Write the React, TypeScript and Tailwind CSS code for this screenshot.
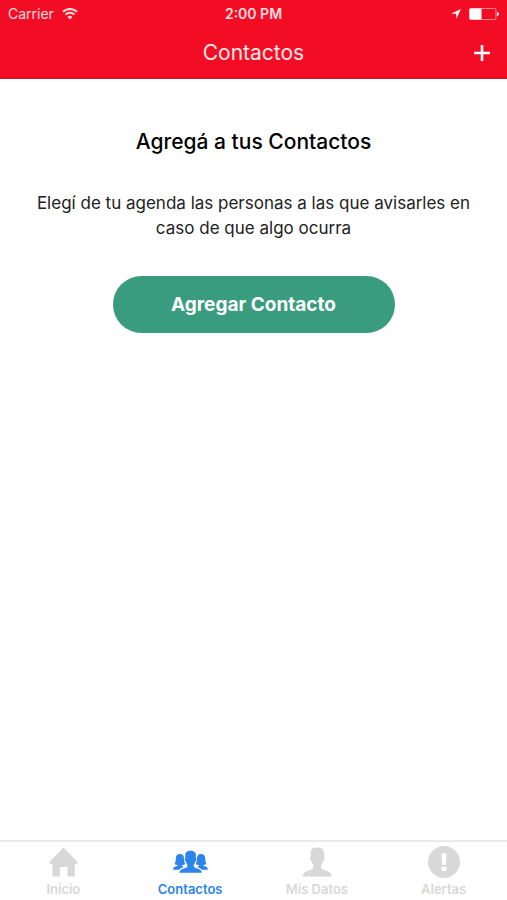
import type { ReactNode } from "react";
import clsx from "clsx";

type Tab = {
    label: string;
    icon: ReactNode;
    active?: boolean;
};

function WifiIcon() {
    return (
        <svg viewBox="0 0 16 12" className="h-3 w-4" fill="none" stroke="currentColor" strokeWidth="2" aria-hidden="true">
            <path d="M1 3.8a10 10 0 0 1 14 0" />
            <path d="M3.5 6.6a6.4 6.4 0 0 1 9 0" />
            <path d="M8 11.5 5.5 9a3.5 3.5 0 0 1 5 0Z" fill="currentColor" stroke="none" />
        </svg>
    );
}

function LocationIcon() {
    return (
        <svg viewBox="0 0 10 10" className="size-[10px]" fill="currentColor" aria-hidden="true">
            <path d="M10 0 0 4.8h5.2V10Z" />
        </svg>
    );
}

function BatteryIcon() {
    return (
        <svg viewBox="0 0 30 12" className="h-3 w-[30px]" aria-hidden="true">
            <rect x="0.5" y="0.5" width="26.5" height="11" rx="1.5" fill="none" stroke="currentColor" strokeOpacity="0.5" />
            <rect x="0.5" y="0.5" width="12" height="11" rx="1" fill="currentColor" />
            <path d="M28 4c1.2.2 2 1 2 2s-.8 1.800-2 2Z" fill="currentColor" />
        </svg>
    );
}

function HomeIcon() {
    return (
        <svg viewBox="0 0 32 32" className="size-8" fill="currentColor" aria-hidden="true">
            <path d="M16.500 1.500 31 16.500 30 17.800H27.800V30.500H20.500V21H12.800V30.500H5.500V17.800H3L2 16.500Z" />
        </svg>
    );
}

function ContactsIcon() {
    return (
        <svg viewBox="0 0 36 32" className="h-8 w-9" fill="currentColor" aria-hidden="true">
            <path d="M18.500 4.800c3.900 0 5.400 1.500 5.400 4.600v2.800c.7.100.7 1.100.4 2.100-.2.900-.6 1.400-1.100 1.500-.3 1.500-.8 2.400-1.400 3v1.600c.4 1.100 2.100 1.600 4.200 2.300 2.400.8 3.700 1.700 3.800 4.100H7.400c.1-2.400 1.400-3.300 3.800-4.100 2.100-.7 3.800-1.200 4.200-2.300v-1.600c-.6-.6-1.100-1.500-1.400-3-.5-.1-.9-.6-1.100-1.500-.3-1-.3-2 .4-2.100V9.400c0-3.100 1.500-4.600 5.400-4.600Z" />
            <path id="side" d="M7.900 8c2.900 0 4 1.600 4.100 4.500.1 2.300.2 3.700 1.300 5.400-.9.700-1.900 1-3.300 1.100v1.100l2 .8c-2 .7-4 1.600-4.900 2.800H1.100c.1-2.200 1.200-2.800 3.100-3.400.9-.3 1.500-.5 1.500-1.300-1.300-.1-2.300-.4-3.200-1.100 1.100-1.700 1.200-3.100 1.300-5.400C3.900 9.600 5 8 7.900 8Z" />
            <use href="#side" transform="matrix(-1 0 0 1 37 0)" />
        </svg>
    );
}

function PersonIcon() {
    return (
        <svg viewBox="0 0 32 32" className="size-8" fill="currentColor" aria-hidden="true">
            <path d="M16.300 1.500c4.800 0 6.700 2 6.700 6l-.1 3.200c.8.200.8 1.400.5 2.600-.3 1.100-.8 1.700-1.400 1.800-.4 1.900-1 3.100-1.800 3.900v2.700c.5 1.400 2.700 2.100 5.200 3 3.300 1.200 5.200 2.300 5.400 5.800H1.800c.2-3.500 2.100-4.600 5.400-5.800 2.500-.9 4.700-1.600 5.200-3V19c-.8-.8-1.400-2-1.800-3.900-.6-.1-1.100-.7-1.400-1.800-.3-1.200-.3-2.400.5-2.600l-.1-3.200c0-4 1.900-6 6.700-6Z" />
        </svg>
    );
}

function AlertIcon() {
    return (
        <svg viewBox="0 0 32 32" className="size-8" aria-hidden="true">
            <circle cx="16" cy="16" r="16" fill="currentColor" />
            <path d="M13.500 7.200h5l-.6 11.800h-3.800Z" fill="white" />
            <rect x="13.600" y="20.800" width="4.800" height="4.200" rx="1" fill="white" />
        </svg>
    );
}

const tabs: Tab[] = [
    { label: "Inicio", icon: <HomeIcon /> },
    { label: "Contactos", icon: <ContactsIcon />, active: true },
    { label: "Mis Datos", icon: <PersonIcon /> },
    { label: "Alertas", icon: <AlertIcon /> },
];

export default function App() {
    return (
        <div className="flex min-h-screen flex-col bg-white font-['Inter',sans-serif] text-black">
            <header className="border-b border-[#d91028] bg-[#f20d25] text-white">
                {/* Status bar */}
                <div className="grid h-7 grid-cols-[1fr_auto_1fr] items-center px-2 text-sm text-white/85">
                    <div className="flex items-center gap-2">
                        <span>Carrier</span>
                        <WifiIcon />
                    </div>
                    <span className="text-center font-semibold">2:00 PM</span>
                    <div className="flex items-center justify-end gap-2 text-white">
                        <LocationIcon />
                        <BatteryIcon />
                    </div>
                </div>

                {/* Navigation bar */}
                <div className="grid h-[50px] grid-cols-[1fr_auto_1fr] items-center px-4">
                    <h1 className="col-start-2 text-[21px] leading-7 text-white/90">Contactos</h1>
                    <button type="button" aria-label="Agregar" className="justify-self-end">
                        <svg viewBox="0 0 18 18" className="size-[18px]" stroke="currentColor" strokeWidth="2.6" aria-hidden="true">
                            <path d="M9 1v16M1 9h16" />
                        </svg>
                    </button>
                </div>
            </header>

            <main className="flex flex-1 flex-col items-center px-8 pt-[49px] text-center">
                <h2 className="text-[21px] leading-7 font-medium">Agregá a tus Contactos</h2>
                <p className="mt-[35px] text-[17px] leading-[25px] text-[#222222]">
                    Elegí de tu agenda las personas a las que avisarles en caso de que algo ocurra
                </p>
                <button
                    type="button"
                    className="mt-[35px] h-[57px] w-full max-w-[282px] rounded-full bg-[#399c7e] pt-0.5 text-[19px] font-bold text-white"
                >
                    Agregar Contacto
                </button>
            </main>

            <nav className="grid grid-cols-4 border-t-2 border-[#ebebeb] pt-1">
                {tabs.map((tab) => (
                    <a
                        key={tab.label}
                        href="#"
                        aria-current={tab.active ? "page" : undefined}
                        className={clsx(
                            "flex flex-col items-center gap-[3px] pb-[3px] text-[13px] leading-4 font-semibold",
                            tab.active ? "text-[#2d84ea]" : "text-[#d8d8d8]"
                        )}
                    >
                        {tab.icon}
                        {tab.label}
                    </a>
                ))}
            </nav>
        </div>
    );
}
